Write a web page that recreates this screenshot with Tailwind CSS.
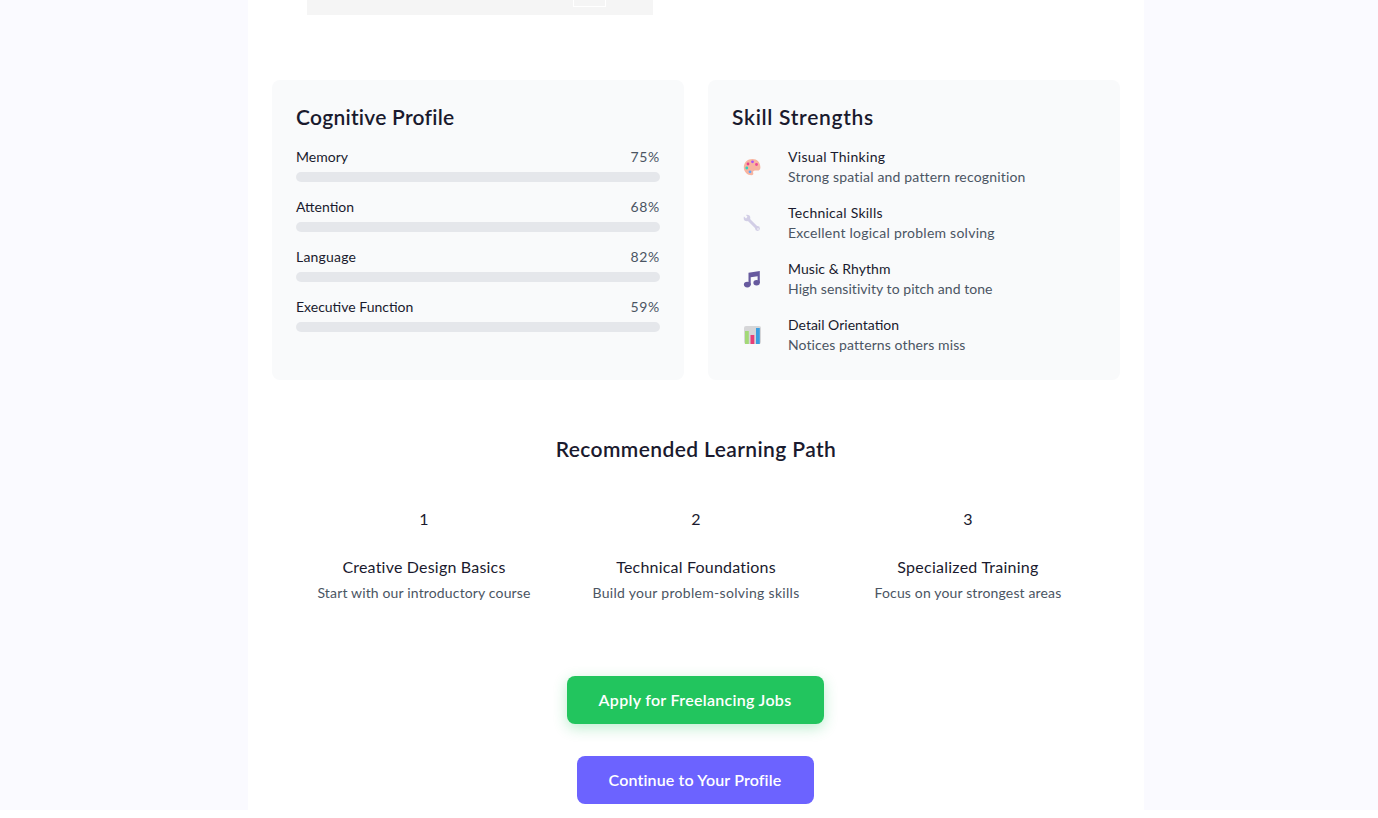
<!DOCTYPE html>
<html lang="en">
<head>
    <meta charset="UTF-8">
    <meta name="viewport" content="width=device-width, initial-scale=1.0">
    <title>Assessment Results</title>
    <script src="https://cdn.jsdelivr.net/npm/@tailwindcss/browser@4"></script>
</head>
<body class="bg-white overflow-hidden font-['Lato','Noto_Sans',sans-serif] text-[#1a1a2e]">
    <div class="bg-[#fafaff] h-[810px]">
        <div class="ml-[248px] w-[896px] h-[810px] bg-white px-6 flex flex-col">
            <!-- Chart leftover -->
            <div class="ml-[35px] w-[346px] h-[15px] bg-[#f5f5f5] shrink-0 flex justify-end pr-[47px]">
                <div class="w-[33px] h-[7px] border border-t-0 border-white"></div>
            </div>

            <!-- Cards -->
            <div class="grid grid-cols-2 gap-6 mt-[65px]">
                <div class="h-[300px] bg-[#f9fafb] rounded-lg p-6">
                    <h3 class="text-[21px] font-semibold leading-6 pt-px mb-[18px] tracking-[0.25px]">Cognitive Profile</h3>
                    <div class="flex flex-col gap-[15px] text-sm">
                        <div>
                            <div class="flex justify-between leading-5 mb-[5px]"><span>Memory</span><span class="text-[#4b5563] tracking-[0.7px]">75%</span></div>
                            <div class="h-[10px] bg-[#e5e7eb] rounded-full"></div>
                        </div>
                        <div>
                            <div class="flex justify-between leading-5 mb-[5px]"><span>Attention</span><span class="text-[#4b5563] tracking-[0.7px]">68%</span></div>
                            <div class="h-[10px] bg-[#e5e7eb] rounded-full"></div>
                        </div>
                        <div>
                            <div class="flex justify-between leading-5 mb-[5px]"><span class="tracking-[0.2px]">Language</span><span class="text-[#4b5563] tracking-[0.7px]">82%</span></div>
                            <div class="h-[10px] bg-[#e5e7eb] rounded-full"></div>
                        </div>
                        <div>
                            <div class="flex justify-between leading-5 mb-[5px]"><span>Executive Function</span><span class="text-[#4b5563] tracking-[0.7px]">59%</span></div>
                            <div class="h-[10px] bg-[#e5e7eb] rounded-full"></div>
                        </div>
                    </div>
                </div>
                <div class="h-[300px] bg-[#f9fafb] rounded-lg p-6">
                    <h3 class="text-[21px] font-semibold leading-6 pt-px mb-[18px] tracking-[0.7px]">Skill Strengths</h3>
                    <div class="flex flex-col gap-4 text-sm">
                        <div class="flex items-center gap-4">
                            <div class="w-10 h-10 flex items-center justify-center">
                                <svg width="18" height="18" viewBox="0 0 18 18">
                                    <path d="M9.500 1C4.500 1 .8 4.500.8 9.200c0 4.500 3.600 8 7.700 8 1.600 0 2.200-1 1.700-2.100-.5-1.300.3-2.500 1.800-2.500h2.400c1.900 0 3-1.300 3-3.200C17.400 4.500 14 1 9.500 1z" fill="#f8b4a0"/>
                                    <circle cx="5" cy="6" r="1.400" fill="#e8448b"/>
                                    <circle cx="9.500" cy="3.800" r="1.400" fill="#a855f7"/>
                                    <circle cx="13.500" cy="6.500" r="1.400" fill="#ec4899"/>
                                    <circle cx="3.800" cy="10" r="1.400" fill="#2dd4bf"/>
                                    <circle cx="7" cy="13.800" r="1.400" fill="#60a5fa"/>
                                </svg>
                            </div>
                            <div>
                                <div class="leading-5 tracking-[0.3px]">Visual Thinking</div>
                                <div class="leading-5 text-[#4b5563] tracking-[0.18px]">Strong spatial and pattern recognition</div>
                            </div>
                        </div>
                        <div class="flex items-center gap-4">
                            <div class="w-10 h-10 flex items-center justify-center">
                                <svg width="18" height="18" viewBox="0 0 18 18">
                                    <line x1="4.500" y1="4.500" x2="14.500" y2="14.500" stroke="#d2cee6" stroke-width="3" stroke-linecap="round"/>
                                    <circle cx="4" cy="4" r="3.300" fill="#d2cee6"/>
                                    <circle cx="14.500" cy="14.500" r="2.400" fill="#d2cee6"/>
                                    <path d="M0 1.500L2 0L4.500 2.800L3 4.500z" fill="#f9fafb"/>
                                    <circle cx="15" cy="15" r="0.800" fill="#f9fafb"/>
                                </svg>
                            </div>
                            <div>
                                <div class="leading-5 tracking-[0.25px]">Technical Skills</div>
                                <div class="leading-5 text-[#4b5563] tracking-[0.25px]">Excellent logical problem solving</div>
                            </div>
                        </div>
                        <div class="flex items-center gap-4">
                            <div class="w-10 h-10 flex items-center justify-center">
                                <svg width="18" height="18" viewBox="0 0 18 18">
                                    <path d="M5.500 2.800L16.800 1V13h-2.200V6.200L7.700 7.300V15H5.500z" fill="#675a9e"/>
                                    <ellipse cx="4.300" cy="14.600" rx="3.400" ry="2.800" fill="#675a9e"/>
                                    <ellipse cx="13.600" cy="12.800" rx="3.200" ry="2.700" fill="#675a9e"/>
                                </svg>
                            </div>
                            <div>
                                <div class="leading-5 tracking-[0.05px]">Music &amp; Rhythm</div>
                                <div class="leading-5 text-[#4b5563] tracking-[0.05px]">High sensitivity to pitch and tone</div>
                            </div>
                        </div>
                        <div class="flex items-center gap-4">
                            <div class="w-10 h-10 flex items-center justify-center">
                                <svg width="17" height="18" viewBox="0 0 17 18">
                                    <rect width="17" height="18" rx="2" fill="#d6d6d8"/>
                                    <rect x="1" y="5" width="3.800" height="13" fill="#a3d977"/>
                                    <rect x="6.500" y="9" width="3.800" height="9" fill="#e83e78"/>
                                    <rect x="12" y="2" width="3.800" height="16" fill="#3b9ee0"/>
                                </svg>
                            </div>
                            <div>
                                <div class="leading-5">Detail Orientation</div>
                                <div class="leading-5 text-[#4b5563] tracking-[0.1px]">Notices patterns others miss</div>
                            </div>
                        </div>
                    </div>
                </div>
            </div>

            <!-- Learning path -->
            <h3 class="text-[21px] font-semibold leading-6 text-center mt-[57px] tracking-[0.4px]">Recommended Learning Path</h3>
            <div class="grid grid-cols-3 mt-[46px] px-4 text-center">
                <div>
                    <div class="leading-6">1</div>
                    <div class="leading-6 mt-6 tracking-[0.2px]">Creative Design Basics</div>
                    <div class="text-sm leading-5 mt-1 text-[#4b5563] tracking-[0.15px]">Start with our introductory course</div>
                </div>
                <div>
                    <div class="leading-6">2</div>
                    <div class="leading-6 mt-6 tracking-[0.2px]">Technical Foundations</div>
                    <div class="text-sm leading-5 mt-1 text-[#4b5563] tracking-[0.3px]">Build your problem-solving skills</div>
                </div>
                <div>
                    <div class="leading-6">3</div>
                    <div class="leading-6 mt-6 tracking-[0.25px]">Specialized Training</div>
                    <div class="text-sm leading-5 mt-1 text-[#4b5563] tracking-[0.15px]">Focus on your strongest areas</div>
                </div>
            </div>

            <!-- Actions -->
            <div class="flex flex-col items-center gap-8 mt-[73px] pr-0.5">
                <button class="h-12 w-[257px] rounded-lg bg-[#22c55e] text-white font-semibold tracking-[0.3px] shadow-[0_4px_14px_rgba(34,197,94,0.3)]">Apply for Freelancing Jobs</button>
                <button class="h-12 w-[237px] rounded-lg bg-[#6c63ff] text-white font-semibold tracking-[0.15px]">Continue to Your Profile</button>
            </div>
        </div>
    </div>
</body>
</html>
